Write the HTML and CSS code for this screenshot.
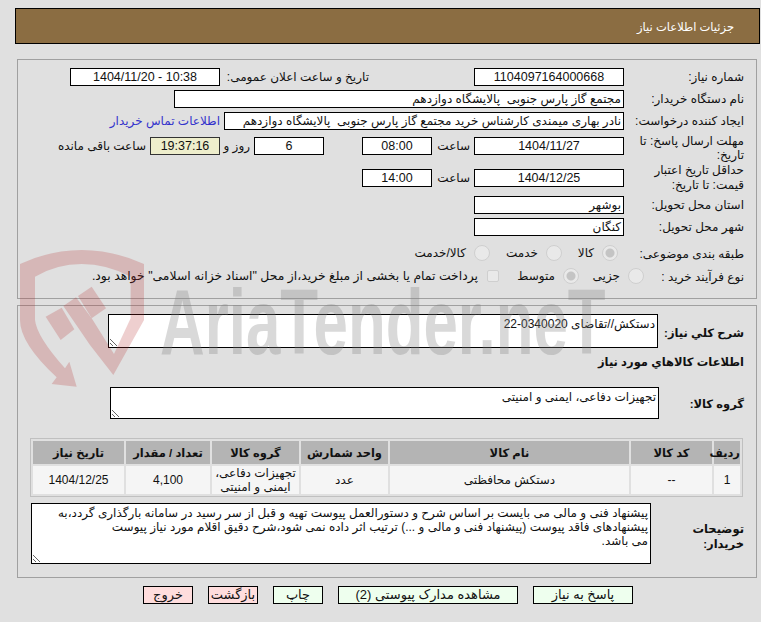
FILE: index.html
```html
<!DOCTYPE html>
<html lang="fa" dir="rtl">
<head>
    <meta charset="UTF-8">
    <title>جزئیات اطلاعات نیاز</title>
    <link rel="stylesheet" href="styles.css">
</head>
<body>
    <div class="page">
        <div class="page-title"><span>جزئیات اطلاعات نیاز</span></div>

        <div class="panel panel-info">
            <div class="row">
                <div class="lbl">شماره نیاز:</div>
                <div class="box center w150">1104097164000668</div>
                <div class="lbl lbl-public">تاریخ و ساعت اعلان عمومی:</div>
                <div class="box center w150" dir="ltr">1404/11/20 - 10:38</div>
            </div>
            <div class="row">
                <div class="lbl">نام دستگاه خریدار:</div>
                <div class="box w450">مجتمع گاز پارس جنوبی  پالایشگاه دوازدهم</div>
            </div>
            <div class="row">
                <div class="lbl">ایجاد کننده درخواست:</div>
                <div class="box w400">نادر بهاری میمندی کارشناس خرید مجتمع گاز پارس جنوبی  پالایشگاه دوازدهم</div>
                <a class="contact" href="#">اطلاعات تماس خریدار</a>
            </div>
            <div class="row row-tall">
                <div class="lbl">مهلت ارسال پاسخ: تا تاریخ:</div>
                <div class="box center w150">1404/11/27</div>
                <div class="unit">ساعت</div>
                <div class="box center w70">08:00</div>
                <div class="box center w70 days">6</div>
                <div class="unit unit-days">روز و</div>
                <div class="box center w70 timer">19:37:16</div>
                <div class="unit unit-left">ساعت باقی مانده</div>
            </div>
            <div class="row row-tall row-valid">
                <div class="lbl">حداقل تاریخ اعتبار قیمت: تا تاریخ:</div>
                <div class="box center w150">1404/12/25</div>
                <div class="unit">ساعت</div>
                <div class="box center w70">14:00</div>
            </div>
            <div class="row">
                <div class="lbl">استان محل تحویل:</div>
                <div class="box w150">بوشهر</div>
            </div>
            <div class="row">
                <div class="lbl">شهر محل تحویل:</div>
                <div class="box w150">کنگان</div>
            </div>
            <div class="row row-choice">
                <div class="lbl lbl-subject">طبقه بندی موضوعی:</div>
                <label class="opt w56"><input type="radio" name="subject" checked disabled>کالا</label>
                <label class="opt w72"><input type="radio" name="subject" disabled>خدمت</label>
                <label class="opt"><input type="radio" name="subject" disabled>کالا/خدمت</label>
            </div>
            <div class="row row-buy">
                <div class="lbl lbl-buy">نوع فرآیند خرید :</div>
                <label class="opt w65"><input type="radio" name="buy" disabled>جزیی</label>
                <label class="opt w80"><input type="radio" name="buy" checked disabled>متوسط</label>
                <label class="opt opt-note"><input type="checkbox" disabled>پرداخت تمام یا بخشی از مبلغ خرید،از محل "اسناد خزانه اسلامی" خواهد بود.</label>
            </div>
        </div>

        <div class="panel panel-goods">
            <div class="row row-desc">
                <div class="lbl lbl-bold lbl-desc">شرح كلي نياز:</div>
                <textarea class="area area-desc" readonly>دستکش//تقاضای 0340020-22</textarea>
            </div>
            <div class="goods-title">اطلاعات كالاهاي مورد نياز</div>
            <div class="row row-group">
                <div class="lbl lbl-bold lbl-group">گروه کالا:</div>
                <textarea class="area area-group" readonly>تجهیزات دفاعی، ایمنی و امنیتی</textarea>
            </div>

            <table class="goods">
                <colgroup>
                    <col class="c1"><col class="c2"><col class="c3"><col class="c4"><col class="c5"><col class="c6"><col class="c7">
                </colgroup>
                <thead>
                    <tr>
                        <th>ردیف</th>
                        <th>کد کالا</th>
                        <th>نام کالا</th>
                        <th>واحد شمارش</th>
                        <th>گروه کالا</th>
                        <th>تعداد / مقدار</th>
                        <th>تاریخ نیاز</th>
                    </tr>
                </thead>
                <tbody>
                    <tr>
                        <td>1</td>
                        <td>--</td>
                        <td>دستکش محافظتی</td>
                        <td>عدد</td>
                        <td>تجهیزات دفاعی، ایمنی و امنیتی</td>
                        <td>4,100</td>
                        <td>1404/12/25</td>
                    </tr>
                </tbody>
            </table>

            <div class="row row-notes">
                <div class="lbl lbl-bold lbl-notes">توضیحات خریدار:</div>
                <textarea class="area area-notes" readonly>پیشنهاد فنی و مالی می بایست بر اساس شرح و دستورالعمل پیوست تهیه و قبل از سر رسید در سامانه بارگذاری گردد،به
پیشنهادهای فاقد پیوست (پیشنهاد فنی و مالی و ...) ترتیب اثر داده نمی شود،شرح دقیق اقلام مورد نیاز پیوست
می باشد.</textarea>
            </div>
        </div>

        <div class="actions">
            <button class="btn btn-go w100">پاسخ به نیاز</button>
            <button class="btn btn-go w180">مشاهده مدارک پیوستی (2)</button>
            <button class="btn btn-go w50">چاپ</button>
            <button class="btn btn-stop w50">بازگشت</button>
            <button class="btn btn-stop w50">خروج</button>
        </div>
    </div>

    <!-- watermark lies over the whole form -->
    <svg class="wm-shield" viewBox="0 0 720 480">
        <path d="M30 72 Q120 30 215 30 Q310 30 402 72 L402 240 L310 405 L240 315 L160 198 L198 172 L245 235 L312 342 L362 235 L362 110 Q290 72 215 72 Q140 72 75 110 L75 240 Q80 290 165 385 L178 365 L200 440 L125 432 L140 412 Q30 310 30 240 Z"/>
        <path d="M107 230 L155 203 L193 268 L152 300 Z"/>
        <path d="M204 168 L245 140 L288 205 L245 235 Z"/>
    </svg>
    <div class="wm-text" dir="ltr">AriaTender.neT</div>
</body>
</html>
```

FILE: styles.css
```css
* {
    margin: 0;
    padding: 0;
    box-sizing: border-box;
}

html, body {
    height: 622px;
    overflow: hidden;
}

body {
    position: relative;
    background: #e0e0e0;
    color: #111;
    font-family: "Liberation Sans", "DejaVu Sans", sans-serif;
    font-size: 12px;
    line-height: 14px;
}

.page {
    padding: 8px 1px 0 15px;
}

.page-title {
    height: 36px;
    margin-bottom: 15px;
    padding: 0 25px;
    background: #8b6d42;
    border: 1px solid #000;
    color: #fff;
    font-size: 11.5px;
    line-height: 36px;
}

.panel {
    margin: 0 3px 0 2px;
    padding: 0 12px 0 0;
    border: 1px solid #a0a0a0;
}

.panel-info {
    height: 240px;
    padding-top: 8px;
    margin-bottom: 6px;
}

.panel-goods {
    height: 273px;
    padding-top: 8px;
}

.row {
    display: flex;
    align-items: flex-start;
    margin-bottom: 4px;
}

.row-tall {
    height: 32px;
    margin-top: 2px;
    margin-bottom: 0;
}

.row-tall .lbl {
    padding-top: 0;
    line-height: 14px;
}

.row-tall .box,
.row-tall .unit {
    margin-top: 3px;
}

.row-valid {
    margin-top: 0;
    height: 30px;
}

.row-valid .lbl {
    margin-top: -3px;
    line-height: 15px;
}

.row-choice {
    margin-top: 8px;
    margin-bottom: 5px;
    height: 18px;
    align-items: center;
}

.row-buy {
    height: 18px;
    align-items: center;
}

.lbl {
    width: 120px;
    flex: none;
    line-height: 15px;
    padding-top: 2px;
}

.lbl-public {
    width: 145px;
    margin-right: 105px;
    margin-left: 4px;
}

.lbl-subject {
    width: 126px;
}

.lbl-buy {
    width: 100px;
}

.lbl-bold {
    font-size: 11.5px;
    font-weight: bold;
}

.lbl-desc {
    width: 86px;
    padding-top: 12px;
}

.lbl-group {
    width: 85px;
    padding-top: 10px;
}

.lbl-notes {
    width: 93px;
    padding-top: 19px;
}

.box {
    flex: none;
    height: 18px;
    padding: 0 2px;
    background: #fff;
    border: 1px solid #000;
    line-height: 16px;
    white-space: pre;
    overflow: hidden;
}

.center {
    font-size: 12.5px;
    text-align: center;
}

.w50 { width: 50px; }
.w56 { width: 56px; }
.w65 { width: 65px; }
.w70 { width: 70px; }
.w72 { width: 72px; }
.w80 { width: 80px; }
.w100 { width: 100px; }
.w150 { width: 150px; }
.w180 { width: 180px; }
.w400 { width: 400px; }
.w450 { width: 450px; }

.unit {
    flex: none;
    width: 42px;
    padding-right: 4px;
    line-height: 18px;
}

.days {
    margin-right: 38px;
}

.unit-days {
    width: 34px;
}

.timer {
    background: #eeeecc;
    border-color: #333;
}

.unit-left {
    width: auto;
}

.contact {
    margin-right: 4px;
    padding-top: 2px;
    color: #3333cc;
    text-decoration: none;
    white-space: nowrap;
}

.opt {
    display: flex;
    flex: none;
    align-items: center;
    gap: 8px;
    white-space: nowrap;
}

.opt-note {
    gap: 9px;
    font-size: 12.4px;
}

.opt input {
    appearance: none;
    flex: none;
    width: 16px;
    height: 16px;
    background: #e9e9e9;
    border: 1px solid #cfcfcf;
    border-radius: 50%;
}

.opt input:checked {
    background: radial-gradient(circle, #c4c4c4 0, #c4c4c4 4px, #e9e9e9 5px);
}

.opt input[type="checkbox"] {
    width: 12px;
    height: 12px;
    border-radius: 2px;
}

.area {
    display: block;
    flex: none;
    padding: 2px;
    background: #fff;
    border: 1px solid #000;
    border-radius: 0;
    color: #111;
    font: inherit;
    outline: none;
}

.area-desc {
    width: 550px;
    height: 34px;
}

.area-group {
    width: 549px;
    height: 32px;
}

.area-notes {
    width: 620px;
    height: 61px;
}

.goods-title {
    margin-top: 7px;
    font-size: 11.5px;
    font-weight: bold;
    line-height: 15px;
}

.row-group {
    margin-top: 17px;
    margin-bottom: 0;
}

.goods {
    width: 712px;
    margin: 19px 1px 6px 0;
    border: 1px solid #c0c0c0;
    border-spacing: 2px;
    table-layout: fixed;
    text-align: center;
}

.c1 { width: 26px; }
.c2 { width: 81px; }
.c3 { width: 239px; }
.c4 { width: 87px; }
.c5 { width: 87px; }
.c6 { width: 84px; }
.c7 { width: 91px; }

.goods th {
    height: 23px;
    background: #b4b4b4;
    font-size: 11.5px;
}

.goods td {
    height: 28px;
    background: #f5f5f5;
}

.row-notes {
    margin-bottom: 0;
}

.actions {
    display: flex;
    gap: 15px;
    margin: 8px 127px 0 0;
}

.btn {
    flex: none;
    height: 18px;
    border: 1px solid #000;
    color: #111;
    font: inherit;
    font-size: 13px;
    text-align: center;
}

.btn-go {
    background: #eeffee;
}

.btn-stop {
    background: #ffdddd;
}

.wm-shield {
    position: absolute;
    left: 10px;
    top: 240px;
    width: 240px;
    height: 160px;
    fill: #b42828;
    opacity: 0.22;
    pointer-events: none;
}

.wm-text {
    position: absolute;
    left: 160px;
    top: 287px;
    color: rgba(128, 128, 128, 0.3);
    font-family: "Liberation Sans", sans-serif;
    font-size: 93px;
    font-weight: bold;
    line-height: 70px;
    white-space: nowrap;
    transform: scaleX(0.665);
    transform-origin: left top;
    pointer-events: none;
}
```
